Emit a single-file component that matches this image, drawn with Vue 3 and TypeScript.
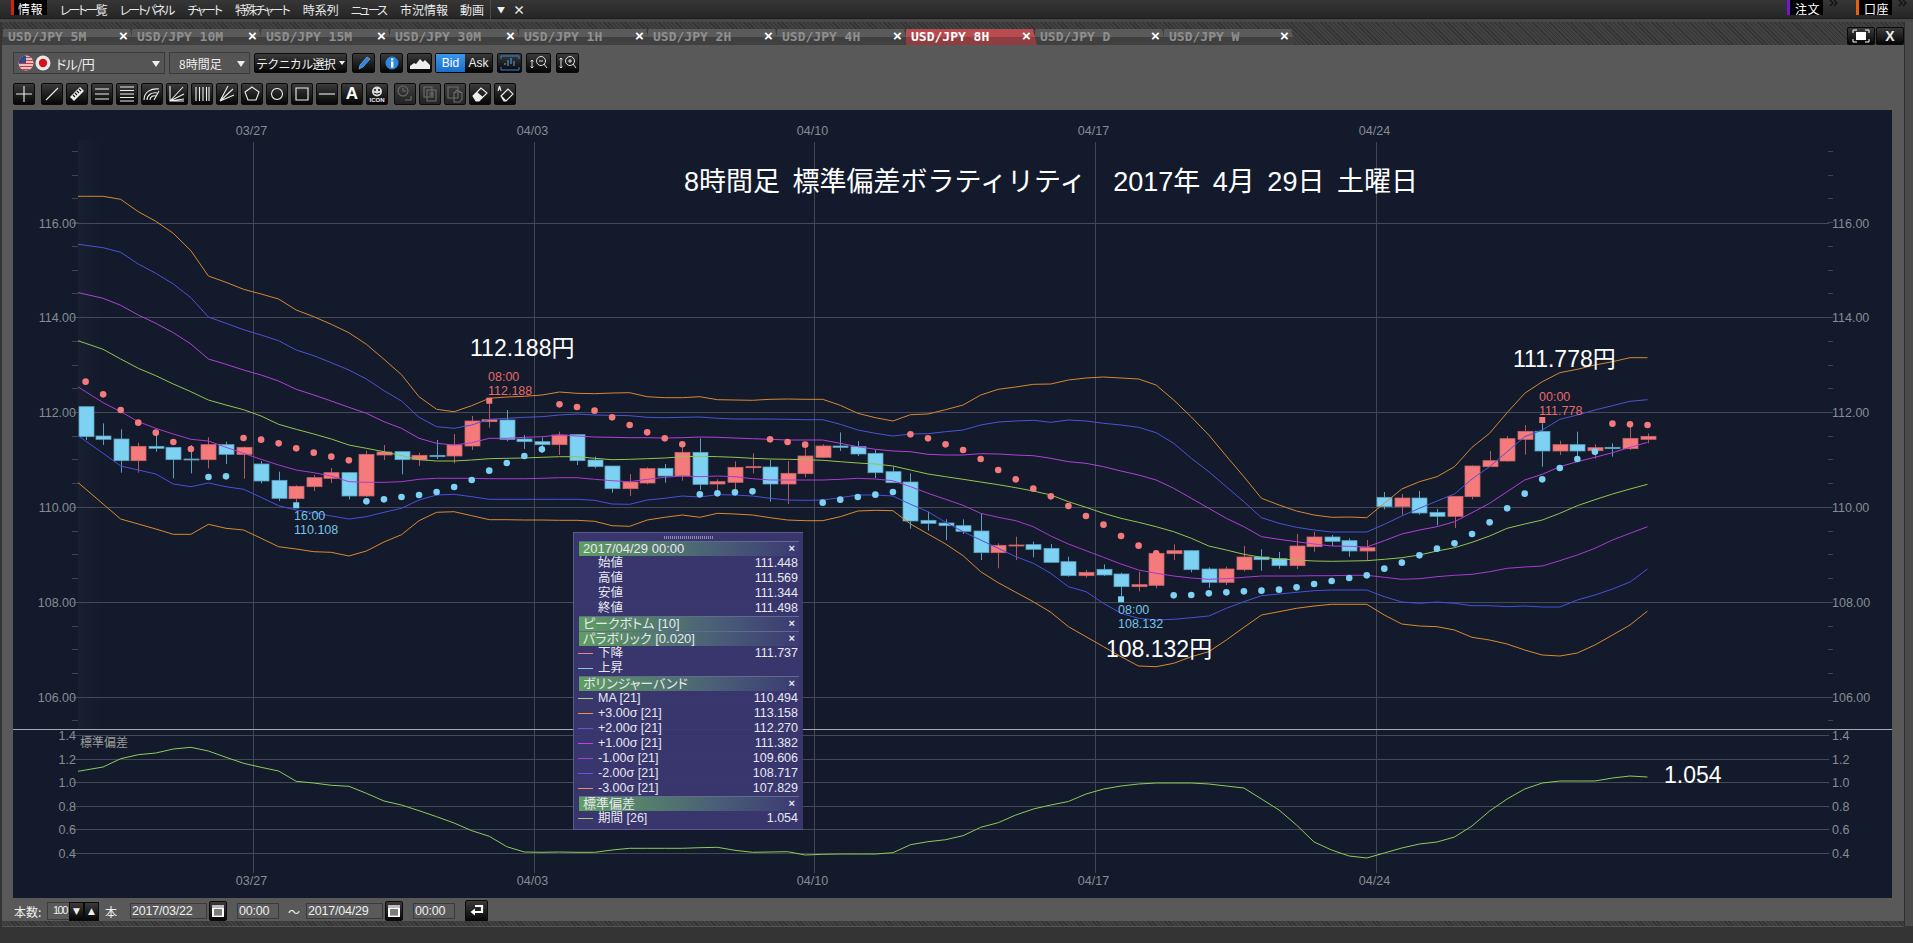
<template>
  <div class="app">
    <div class="menubar">
      <span class="grip"></span>
      <span class="menu-active">情報</span>
      <nav class="menu">
        <span v-for="m in menus" :key="m.text" :class="{ kana: m.kana }">{{ m.text }}</span>
      </nav>
      <span class="menu-sep"></span>
      <span class="menu-caret">▼</span>
      <span class="menu-x">×</span>
      <div class="menu-right">
        <span class="grip2"></span>
        <span class="pill pill-purple">注文</span>
        <span class="chev"><svg width="10" height="7" viewBox="0 0 10 7"><path d="M1 0l3 3-3 3M5 0l3 3-3 3" fill="none" stroke="#111" stroke-width="1.4"/></svg></span>
        <span class="grip2 second"></span>
        <span class="pill pill-orange">口座</span>
        <span class="chev"><svg width="10" height="7" viewBox="0 0 10 7"><path d="M1 0l3 3-3 3M5 0l3 3-3 3" fill="none" stroke="#111" stroke-width="1.4"/></svg></span>
      </div>
    </div>
    <div class="gap-strip"></div>

    <div class="workspace">
      <div class="window">
        <div class="tabbar">
          <div v-for="t in tabs" :key="t" class="tab" :class="{ active: t === activeTab }">
            <span>USD/JPY {{ t }}</span><b>×</b>
          </div>
          <div class="win-btns">
            <button class="btn win"><svg width="18" height="14" viewBox="0 0 18 14"><path d="M1 4V1h4M13 1h4v3M17 10v3h-4M5 13H1v-3" fill="none" stroke="#fff"/><rect x="4" y="3" width="10" height="8" fill="#fff"/></svg></button>
            <button class="btn win big-x">X</button>
          </div>
        </div>

        <div class="body">
          <div class="tools">
            <div class="sel sel-pair">
              <svg width="33" height="20" viewBox="0 0 33 20">
                <defs>
                  <clipPath id="us"><circle cx="8" cy="10" r="7.5" /></clipPath>
                </defs>
                <g clip-path="url(#us)">
                  <rect x="0" y="2" width="16" height="16" fill="#eee" />
                  <path d="M0 4.5h16M0 7.5h16M0 10.5h16M0 13.5h16M0 16.5h16" stroke="#c9373f" stroke-width="1.5" />
                  <rect x="0" y="2" width="8" height="8" fill="#34488c" />
                </g>
                <circle cx="25" cy="10" r="7.5" fill="#e8e8e8" />
                <circle cx="25" cy="10" r="4.2" fill="#d3141c" />
              </svg>
              <span>ドル/円</span><i class="caret"></i>
            </div>
            <div class="sel sel-time"><span>8時間足</span><i class="caret"></i></div>
            <button class="btn tech">テクニカル選択<i class="caret small"></i></button>
            <button class="btn w23"><svg width="16" height="16" viewBox="0 0 16 16"><path d="M3 14l1-4 7-8 3 2-7 8z" fill="#2c86e0" stroke="#7cc0ff" stroke-width=".6"/></svg></button>
            <button class="btn w23"><svg width="16" height="16" viewBox="0 0 16 16"><circle cx="8" cy="8" r="6.5" fill="#2c86e0"/><rect x="7" y="6.5" width="2.4" height="6" fill="#fff"/><rect x="7" y="3.4" width="2.4" height="2" fill="#fff"/></svg></button>
            <button class="btn w25"><svg width="20" height="12" viewBox="0 0 20 12"><path d="M0 12V9l4-3 2 1 4-5 3 3 2-2 5 5v4z" fill="#eee"/></svg></button>
            <div class="bidask"><span class="bid">Bid</span><span class="ask">Ask</span></div>
            <button class="btn w25"><svg width="20" height="16" viewBox="0 0 20 16"><path d="M1 4V1h18v3M1 12v3h18v-3" fill="none" stroke="#2c86e0"/><path d="M5 10V8M8 11V5M11 9V3M14 11V6" stroke="#5aa8f0"/></svg></button>
            <button class="btn w25"><svg width="20" height="16" viewBox="0 0 20 16"><circle cx="12" cy="6" r="4.5" fill="none" stroke="#ddd"/><path d="M15 9l3 4M10 6h4M3 5v8M1.5 6.5L3 5l1.5 1.5M1.5 11.5L3 13l1.5-1.5" stroke="#ddd" fill="none"/></svg></button>
            <button class="btn w23"><svg width="20" height="16" viewBox="0 0 20 16"><circle cx="12" cy="6" r="4.5" fill="none" stroke="#ddd"/><path d="M15 9l3 4M10 6h4M12 4v4M3 3v10M1.5 4.5L3 3l1.5 1.5M1.5 11.5L3 13l1.5-1.5" stroke="#ddd" fill="none"/></svg></button>
          </div>

          <div class="tools second">
            <button v-for="(ic, n) in drawTools" :key="n" class="btn tool" :class="{ dim: ic.dim, spaced: ic.gap }">
              <svg v-if="ic.d || ic.solid" width="18" height="18" viewBox="0 0 18 18">
                <path v-if="ic.solid" :d="ic.solid" fill="currentColor" />
                <path v-if="ic.d" :d="ic.d" fill="none" stroke="currentColor" stroke-width="1.1" />
                <path v-if="ic.ink" :d="ic.ink" fill="none" stroke="#111" stroke-width="1.1" />
              </svg>
              <span v-else-if="ic.letter" class="tool-a">{{ ic.letter }}</span>
              <span v-else class="tool-face">
                <svg width="12" height="11" viewBox="0 0 12 11"><circle cx="6" cy="5.5" r="5" fill="#ddd"/><circle cx="4" cy="4" r="1" fill="#111"/><circle cx="8" cy="4" r="1" fill="#111"/><path d="M3 7q3 2.5 6 0" stroke="#111" fill="none"/></svg>
                <em>ICON</em>
              </span>
            </button>
          </div>

          <div class="chart-wrap">
            <svg class="chart" width="1879" height="788" viewBox="13 110 1879 788">
              <defs>
                <linearGradient id="gutter" x1="0" x2="1" y1="0" y2="0">
                  <stop offset="0" stop-color="#fff" stop-opacity=".025" />
                  <stop offset="1" stop-color="#fff" stop-opacity="0" />
                </linearGradient>
              </defs>
              <rect x="13" y="110" width="1879" height="788" fill="#121a2b" />
              <rect x="78" y="140" width="24" height="590" fill="url(#gutter)" />

              <line v-for="y in ticks" :key="'t' + y" x1="72" x2="78" :y1="y" :y2="y" class="tick" />
              <line v-for="y in ticks" :key="'r' + y" x1="1828" x2="1833" :y1="y" :y2="y" class="tick" />
              <line v-for="a in mainAxis" :key="'h' + a.label" x1="72" x2="1829" :y1="a.y" :y2="a.y" class="grid" />
              <line v-for="a in subAxis" :key="'s' + a.label" x1="72" x2="1829" :y1="a.y" :y2="a.y" class="grid" />
              <line v-for="d in dates" :key="'v' + d.label" :x1="d.x" :x2="d.x" y1="142" y2="873" class="vgrid" />
              <line x1="13" x2="1892" y1="729.5" y2="729.5" class="divider" />

              <template v-for="a in [...mainAxis, ...subAxis]" :key="'l' + a.label">
                <text class="axis" x="76" :y="a.y + 4.5" text-anchor="end">{{ a.label }}</text>
                <text class="axis" x="1832" :y="a.y + 4.5">{{ a.label }}</text>
              </template>
              <template v-for="d in dates" :key="'d' + d.label">
                <text class="axis" :x="d.x - 2" y="135" text-anchor="middle">{{ d.label }}</text>
                <text class="axis" :x="d.x - 2" y="885" text-anchor="middle">{{ d.label }}</text>
              </template>

              <g v-for="(c, i) in candles" :key="'c' + i">
                <line :x1="c.x" :x2="c.x" :y1="c.hi" :y2="c.lo" :stroke="c.up ? '#b3595d' : '#5d9fbd'" />
                <rect :x="c.x - 7.5" :y="c.top" width="15" :height="c.h" :fill="c.up ? upColor : downColor"
                  :stroke="c.up ? '#c8666a' : '#5d9fbd'" stroke-width=".8" />
              </g>

              <polyline v-for="(b, i) in bands" :key="'b' + i" :points="b.points" :stroke="b.color" class="band" />
              <polyline :points="stdPoints" stroke="#8ecb5c" class="band" />

              <circle v-for="(p, i) in dots" :key="'p' + i" :cx="p.x" :cy="p.y" r="3.3" :fill="p.up ? upColor : downColor" />

              <rect v-for="m in markers" :key="'m' + m.x" :x="m.x - 3" :y="m.y - 3" width="6" height="6" :fill="m.up ? upColor : downColor" />
              <template v-for="n in notes" :key="n.value">
                <text class="note" :x="n.x" :y="n.y" :fill="n.up ? '#e8696c' : '#74c6ea'">{{ n.time }}</text>
                <text class="note" :x="n.x" :y="n.y + 14" :fill="n.up ? '#e8696c' : '#74c6ea'">{{ n.value }}</text>
              </template>

              <text class="title" x="684" y="191">8時間足 標準偏差ボラティリティ　2017年 4月 29日 土曜日</text>
              <text class="big" x="470" y="356">112.188円</text>
              <text class="big" x="1513" y="367">111.778円</text>
              <text class="big" x="1106" y="657">108.132円</text>
              <text class="big" x="1664" y="783">1.054</text>
              <text class="sub-name" x="80" y="747">標準偏差</text>
            </svg>

            <div class="info">
              <div class="info-grip"></div>
              <template v-for="row in infoRows" :key="row.label">
                <div v-if="row.head" class="info-head"><span>{{ row.label }}</span><b>×</b></div>
                <div v-else class="info-row">
                  <i class="swatch" :style="{ background: row.color || 'transparent' }"></i>
                  <span class="info-label">{{ row.label }}</span>
                  <span class="info-val">{{ row.value }}</span>
                </div>
              </template>
            </div>
          </div>

          <div class="foot">
            <span class="foot-label">本数:</span>
            <span class="field count">100</span>
            <button class="btn step">▼</button>
            <button class="btn step">▲</button>
            <span class="foot-label hon">本</span>
            <span class="field date">2017/03/22</span>
            <button class="btn cal"><svg width="14" height="14" viewBox="0 0 14 14"><rect x="1" y="1" width="12" height="12" fill="#fff"/><rect x="1" y="1" width="12" height="3" fill="#bbb"/><path d="M3 6h8M3 8h8M3 10h8M4 5v7M6 5v7M8 5v7M10 5v7" stroke="#333" stroke-width=".8"/></svg></button>
            <span class="field time">00:00</span>
            <span class="tilde">〜</span>
            <span class="field date">2017/04/29</span>
            <button class="btn cal"><svg width="14" height="14" viewBox="0 0 14 14"><rect x="1" y="1" width="12" height="12" fill="#fff"/><rect x="1" y="1" width="12" height="3" fill="#bbb"/><path d="M3 6h8M3 8h8M3 10h8M4 5v7M6 5v7M8 5v7M10 5v7" stroke="#333" stroke-width=".8"/></svg></button>
            <span class="field time">00:00</span>
            <button class="btn back"><svg width="16" height="14" viewBox="0 0 16 14"><path d="M6 2h7v6H4" fill="none" stroke="#fff" stroke-width="2.2"/><path d="M6 4.5L1.5 8 6 11.5z" fill="#fff"/></svg></button>
          </div>
        </div>
        <div class="foot-hatch"></div>
      </div>
      <div class="edge"></div>
    </div>
  </div>
</template>

<script setup lang="ts">
type Row = { label: string; head?: boolean; value?: string; color?: string }
type Tool = { d?: string; solid?: string; ink?: string; dim?: boolean; gap?: boolean; letter?: string }

const menus = [
  { text: 'レート一覧', kana: true },
  { text: 'レートパネル', kana: true },
  { text: 'チャート', kana: true },
  { text: '特殊チャート', kana: true },
  { text: '時系列', kana: false },
  { text: 'ニュース', kana: true },
  { text: '市況情報', kana: false },
  { text: '動画', kana: false }
]
const tabs = ['5M', '10M', '15M', '30M', '1H', '2H', '4H', '8H', 'D', 'W']
const activeTab = '8H'
const upColor = '#f47a7c'
const downColor = '#7dd2f3'

const drawTools: Tool[] = [
  { d: 'M9 1v16M1 9h16' },
  { d: 'M3 15L15 3', gap: true },
  { solid: 'M2 12L12 2l4 4L6 16z', ink: 'M5 10l2 2M7 8l2 2M9 6l2 2M11 4l2 2' },
  { d: 'M2 4h14M2 9h14M2 14h14' },
  { d: 'M2 2h14M2 5.5h14M2 9h14M2 12.5h14M2 16h14' },
  { d: 'M1 15C1 7 8 3 16 4M4 15c0-5 5-8 10-7M7 15c0-3 3-5 6-4M11 15l5-9' },
  { d: 'M2 1v15h14M2 16L15 2M2 16l14-7M2 16l14-2' },
  { d: 'M3 2v14M6.5 2v14M10 2v14M13.5 2v14M16 2v14' },
  { d: 'M2 16L10 1M2 16L15 4M2 16l14-6' },
  { d: 'M9 2l7 5-3 8H5L2 7z' },
  { d: 'M9 3.5a5.5 5.5 0 1 0 .01 0z' },
  { d: 'M3 3h12v12H3z' },
  { d: 'M1 9h16' },
  { letter: 'A' },
  {},
  { d: 'M7 1a5 5 0 1 0 .01 0zM7 3v3h3M9 15h6v-4', dim: true, gap: true },
  { d: 'M3 2h8v10H3zM6 5h9v11H6zM8 8h5M8 10h5M8 12h5', dim: true },
  { d: 'M2 2h10v11H2zM8 17V8c0-1 2-1 2 0V6c0-1 2-1 2 0v1c0-1 2-1 2 0v1c0-1 2-1 2 0v6l-2 3z', dim: true },
  { d: 'M2 11l8-8 6 5-8 8H5z', solid: 'M2 11l4-4 6 5-4 4H5z' },
  { d: 'M2 4h3M3.5 1L2 6M3.5 1L5 6M5 11l7-7 5 5-7 7H8zM5 11l5 5' }
]

// x of the n-th candle, one candle every 17.55px
const cx = (i: number) => 85.6 + 17.55 * i
// values below were measured on 3x crops, each block has its own top edge
const lift = (base: number, vals: number[]) => vals.map((v) => base + v / 3)

type Ohlc = [number, number, number, number, number]
const blocks: [number, Ohlc[]][] = [
  [360, [
    [0,140,140,230,240],[0,190,228,238,255],[0,208,237,302,338],[1,248,259,302,338],[0,218,259,265,275],[0,262,262,299,355],
    [0,255,297,299,340],[1,232,254,299,325],[0,245,254,283,312],[1,260,262,283,356],[0,303,312,363,370],[0,335,361,415,423],
    [1,376,379,416,430],[1,345,353,380,393],[1,324,338,355,369],[0,338,338,408,418],[1,272,283,408,410],[1,255,276,285,300],
    [0,275,275,299,343],[1,278,286,299,318],[0,240,286,290,297],[1,222,255,288,310],[1,168,183,258,270],[1,122,179,185,203],
    [0,150,180,238,244],[0,225,237,245,267],[0,232,245,254,278],[1,215,225,254,285],[0,222,224,302,315],[0,290,300,320,325],
    [0,318,318,386,398],[1,342,366,386,408],[1,322,326,369,373],[0,312,325,348,368],[1,262,277,348,362],[0,235,277,373,390],
    [1,358,365,372,390],[1,304,322,367,390],[1,280,320,323,340],[0,300,321,372,425],[1,303,340,372,432],[1,265,288,341,352],
    [1,253,258,292,294],[0,217,258,262,273],[0,243,260,282,288],[0,270,280,338,354],[0,320,335,368,368],[0,340,366,483,506],
    [0,455,481,490,512],[0,478,489,497,540],[0,478,497,514,522]
  ]],
  [440, [[0,222,273,338,360],[1,310,316,338,385],[1,290,315,318,360],[0,305,314,328,352],[0,312,325,367,367]]],
  [420, [
    [0,410,425,467,470],[1,450,457,467,473],[0,433,448,465,468],[0,458,462,500,530],[1,455,494,500,514],[1,392,400,496,505],
    [1,373,392,401,420],[0,392,392,449,457],[0,442,447,487,503],[1,440,447,487,495],[1,378,411,449,454],[0,388,411,419,452],
    [0,396,416,437,446],[1,342,378,437,447],[1,336,351,380,395],[0,345,351,364,378],[0,355,362,393,410],[1,360,383,393,423],
    [0,216,232,260,268],[1,222,234,260,285],[0,213,234,279,284],[0,267,277,289,316],[1,229,229,289,324],[1,136,138,230,238],
    [1,93,122,140,140],[1,48,56,123,125],[1,15,34,58,104]
  ]],
  [340, [[0,250,274,333,380],[1,302,314,333,345],[0,275,314,333,350],[1,313,323,332,356],[0,310,322,326,350],[1,260,295,326,330],[1,280,289,298,310]]]
]

const candles = blocks.flatMap(([base, list]) => list.map(([up, hi, top, bot, lo]) => ({
  up: up === 1,
  hi: base + hi / 3,
  top: base + top / 3,
  h: Math.max((bot - top) / 3, 1),
  lo: base + lo / 3
}))).map((c, i) => ({ ...c, x: Math.round(cx(i)) + 0.5 }))

// parabolic dots: [first candle, is it the falling (red) side, top edge, values]
const dotRuns: [number, boolean, number, number[]][] = [
  [0, true, 360, [65,103,150,188,218,246,267]],
  [7, false, 360, [351,349]],
  [9, true, 360, [234,239,250,265,278,290,301]],
  [16, false, 360, [424,418,411,405,396,381,360,332,309,288,268]],
  [27, true, 360, [133,141,152,172,195,217,235,253]],
  [35, false, 360, [403,400,397,394]],
  [39, true, 360, [238,246,254]],
  [42, false, 360, [428,419,411,404,396]],
  [47, true, 360, [223,235,253,270,297,330,358,386,409]],
  [56, true, 420, [258,288,314,348,377,400]],
  [62, false, 420, [526,525,520,517,514,512,509,502,492,483,474,466,446,428,406,386,370,342,307,265,221,178,144]],
  [85, false, 340, [357,335]],
  [87, true, 340, [251,253,255]]
]
const dots = dotRuns.flatMap(([start, up, base, vals]) =>
  vals.map((v, n) => ({ x: cx(start + n), y: base + v / 3, up }))
)

const toPoints = (ys: number[]) => {
  const pts = ys.map((y, i) => `${cx(i).toFixed(1)},${y.toFixed(1)}`)
  pts.unshift(`78,${(ys[0] - (ys[1] - ys[0]) * 0.43).toFixed(1)}`)
  return pts.join(' ')
}

const plus3 = [
  ...lift(180, [49,49,58,95,124,160,212,288,307,328,342,357,390,410,433,458,493,538,584,650,688,695,677,655,651,649,645,636]),
  ...lift(360, [100,101,99,98,110,113,113,110,119,120,121,118,117,118,118,136,160,173,183,164,162,149,135,105,88,81,73,72]),
  380, 378, 377, 378, 379, 385, 400,
  ...lift(420, [-9,45,108,170,235,255,273,285,292,291,293,250,207,185,170,140]),
  ...lift(340, [322,280,218,160,125,98,88,75,65,53,53])
]
const plus2 = [
  ...lift(180, [196,203,217,252,280,312,353,411,430,449,465,482,510,527,548,570,597,632,663]),
  ...lift(360, [172,200,205,195,178,175,172,170,165,162,165,166,167,172,173,172,171,175,177,177,177,178,179,179,193,210,220,228,222,221,215,210,195,186,183,181,187]),
  ...lift(420, [0,3,10,15,22,38,70,115,155,200,245,293,310,322,330,336,336,336,313,288,265,243,222]),
  ...lift(340, [417,380,335,290,270,238,225,210,197,184,179])
]
const plus1 = [
  ...lift(180, [343,355,376,405,430,458,492,537,553,570,585,603,628,645,663,682,700,725]),
  ...lift(360, [205,235,250,255,248,235,235,232,230,225,228,231,232,233,233,234,233,231,232,234,236,238,240,240,240,250,260,268,273,275,283,285,285,281,282,285,287,295]),
  ...lift(420, [125,130,140,153,165,180,205,235,265,295,320,350,358,365,372,378,379,381,362,342,330,320,305,278,250,215]),
  ...lift(340, [420,403,380,365,352,338,322,307])
]
const middle = [
  ...lift(180, [490,508,537,565,587,612,635,660,675,689,708]),
  ...lift(360, [193,208,222,237,255,265,275,287,299,303,303,300,296,295,294,292,290,290,295,299,298,296,294,290,289,290,292,295,297,298,299,301,305,309,312,318,330,342,350,358,366,374,383,393,405]),
  ...lift(420, [245,262,280,295,307,320,335,355,378,390,403,412,417,420,423,424,423,422,418,413,405,393,383,367,348,325,312,300,280]),
  ...lift(340, [497,479,462,447,433])
]
const minus1 = [
  ...lift(360, [95,128,155,185,205,222,238,243,262,280,298,315,330,338,348,365,367,367,365,358,355,355,355,356,356,356,355,353,353,358,362,365,358,352,348,350,348,350,356,360,360,360,360,358,355,357,362,380,400,418,436,460,472,482,500,528]),
  ...lift(420, [372,392,412,432,450,460,468,474,478,476,472,468,468,468,467,467,466,466,472,478,476,470,466,463,455,445,441,438,422]),
  ...lift(340, [645,625,600,580,560])
]
const minus2 = [
  ...lift(360, [243,280,318,330,342,372,380,369,380,388,412,437,450,458,468,477,470,457,445,420,405,403,410,418,418,418,418,418,418,421,432,433,420,415,408,411,404,405,408,415,420,421,420,413,405,405,408,433,455]),
  ...lift(440, [247,275,300,325,350,370,400,440,455,490,520,535,540,538,533,528,505,485,467,462,457,452,450,450,450,470,486,490,486,490,497,497,500]),
  606, 607, 607, 600, 595, 589, 582, 569
]
const minus3 = [
  ...lift(360, [387,432,477,492,507,523,523,493,505,510,535,560,567,575,577,588,573,546,524,482,457,455,467,479,479,480,480,481,481,484,497,499,480,472,465,472,460,462,465,473,480,482,482,470,453,451,452]),
  ...lift(440, [252,282,312,347,395,428,457,485,517,560,590,620,650,678,680,670,650,635,600,562,525,515,505,498,493,493,493,525,552,558,560,570,592,600,612]),
  650, 655, 656, 653, 645, 635, 625, 611
]

const bands = [
  { color: '#d8882f', points: toPoints(plus3) },
  { color: '#4d54d6', points: toPoints(plus2) },
  { color: '#b33fdc', points: toPoints(plus1) },
  { color: '#93c64d', points: toPoints(middle) },
  { color: '#a93bd2', points: toPoints(minus1) },
  { color: '#4a50dc', points: toPoints(minus2) },
  { color: '#dd8a2c', points: toPoints(minus3) }
]

const stdLine = [
  ...lift(720, [150,141,116,104,99,87,82,93,112,130,142,153,184,189,196,199,220,243,255,272,290,309,332,349,380,396,397,396,397,397,390,385,385,385,385,383,382,391,397,396,395,405,403,402,402,402,398,374,365,359,347,322,308]),
  815, 809, 805, 801.5, 794, 789, 786, 784, 783, 783, 783, 784, 786, 788, 799, 810, 825, 842, 850, 856, 858, 853, 848, 844, 842, 837, 826, 811, 799, 789, 783, 781, 781, 781, 778, 776, 777
]
const stdPoints = toPoints(stdLine)

const mainAxis = [116, 114, 112, 110, 108, 106].map((v) => ({
  label: v.toFixed(2),
  y: Math.round(412.3 + (112 - v) * 47.45) + 0.5
}))
const subAxis = [1.4, 1.2, 1.0, 0.8, 0.6, 0.4].map((v, i) => ({
  label: v.toFixed(1),
  y: Math.round(735 + i * 23.55) + 0.5
}))
const ticks = Array.from({ length: 25 }, (_, i) => Math.round(151 + i * 23.725) + 0.5).filter((y) => y < 725)
const dates = ['03/27', '04/03', '04/10', '04/17', '04/24'].map((label, i) => ({
  label,
  x: Math.floor(253.7 + i * 280.6) + 0.5
}))

const markers = [
  { x: cx(23), y: 400.7, up: true },
  { x: cx(12), y: 505.3, up: false },
  { x: cx(59), y: 599.3, up: false },
  { x: cx(83), y: 420, up: true }
]
const notes = [
  { x: 488, y: 381, time: '08:00', value: '112.188', up: true },
  { x: 294, y: 520, time: '16:00', value: '110.108', up: false },
  { x: 1118, y: 614, time: '08:00', value: '108.132', up: false },
  { x: 1539, y: 401, time: '00:00', value: '111.778', up: true }
]

const infoRows: Row[] = [
  { label: '2017/04/29 00:00', head: true },
  { label: '始値', value: '111.448' },
  { label: '高値', value: '111.569' },
  { label: '安値', value: '111.344' },
  { label: '終値', value: '111.498' },
  { label: 'ピークボトム [10]', head: true },
  { label: 'パラボリック [0.020]', head: true },
  { label: '下降', value: '111.737', color: '#f47c7c' },
  { label: '上昇', value: '', color: '#7cc8ee' },
  { label: 'ボリンジャーバンド', head: true },
  { label: 'MA [21]', value: '110.494', color: '#a8d080' },
  { label: '+3.00σ [21]', value: '113.158', color: '#f79030' },
  { label: '+2.00σ [21]', value: '112.270', color: '#5858d8' },
  { label: '+1.00σ [21]', value: '111.382', color: '#c040f0' },
  { label: '-1.00σ [21]', value: '109.606', color: '#a040d0' },
  { label: '-2.00σ [21]', value: '108.717', color: '#5858f0' },
  { label: '-3.00σ [21]', value: '107.829', color: '#e8905a' },
  { label: '標準偏差', head: true },
  { label: '期間 [26]', value: '1.054', color: '#a0c878' }
]
</script>

<style>
html, body { margin: 0; background: #333; }
</style>

<style scoped>
.app {
  width: 1913px;
  height: 943px;
  display: flex;
  flex-direction: column;
  overflow: hidden;
  background: #343434;
  font-family: "Liberation Sans", "Noto Sans CJK JP", sans-serif;
  font-feature-settings: "palt";
  color: #eee;
}

/* top menu */
.menubar {
  height: 19px;
  display: flex;
  align-items: center;
  background: linear-gradient(#363636, #262626);
  border-bottom: 1px solid #1c1c1c;
  box-sizing: border-box;
  font-family: "Noto Sans CJK JP", sans-serif;
  font-size: 12px;
}
.grip {
  width: 7px;
  height: 16px;
  margin: 0 4px 0 0;
  background: radial-gradient(#777 40%, transparent 45%) 0 0 / 2px 2px;
}
.menu-active {
  height: 15px;
  width: 36px;
  align-self: flex-start;
  box-sizing: border-box;
  padding-left: 4px;
  background: #000;
  border-left: 3px solid #d8200f;
  line-height: 18px;
  letter-spacing: 0.5px;
  color: #fff;
}
.menu {
  display: flex;
  gap: 12px;
  margin-left: 13px;
  color: #e8e8e8;
  white-space: nowrap;
}
.menu .kana { letter-spacing: -2px; padding-right: 2px; }
.menu-sep { width: 1px; height: 19px; background: #4b4b4b; margin-left: 6px; }
.menu-caret { font-size: 8px; margin-left: 6px; }
.menu-x { font-size: 12px; font-weight: bold; margin-left: 8px; }
.menu-right { margin-left: auto; display: flex; align-items: flex-start; height: 19px; }
.grip2 {
  width: 7px;
  height: 19px;
  margin-right: 4px;
  background: radial-gradient(#777 40%, transparent 45%) 0 0 / 2px 2px;
}
.grip2.second { margin-left: 1px; }
.pill {
  height: 15px;
  width: 36px;
  box-sizing: border-box;
  padding-left: 5px;
  background: #000;
  line-height: 18px;
  letter-spacing: 0.5px;
  color: #fff;
}
.pill-purple { border-left: 3px solid #7a12d8; }
.pill-orange { border-left: 3px solid #e8620e; }
.chev { width: 21px; display: flex; justify-content: center; }

.gap-strip { height: 3px; background: #484848; }

.workspace { flex: 1; display: flex; min-height: 0; padding-left: 2px; }
.window { width: 1902px; display: flex; flex-direction: column; }
.edge { flex: 1; background: #4b4b4b; border-left: 1px solid #2f2f2f; height: 904px; }

/* tabs */
.tabbar {
  height: 23px;
  display: flex;
  align-items: flex-end;
  padding-left: 1px;
  background: repeating-linear-gradient(45deg, #333 0 1px, #414141 1px 3px);
}
.tab {
  width: 131px;
  height: 16px;
  margin-right: -2px;
  flex: none;
  position: relative;
  box-sizing: border-box;
  padding-left: 5px;
  clip-path: polygon(0 100%, 0 1px, 1px 0, 127px 0, 131px 100%);
  background: linear-gradient(#5a5a5a 50%, #404040 50%);
  font: bold 13px/16px "DejaVu Sans Mono", monospace;
  color: #8f8f8f;
  white-space: nowrap;
}
.tab b {
  position: absolute;
  left: 116px;
  top: -1px;
  font: bold 15px/16px "Liberation Sans", sans-serif;
  color: #fff;
}
.tab.active {
  z-index: 1;
  background: linear-gradient(#b84d50 50%, #8e3d40 50%);
  color: #fff;
}
.win-btns { margin-left: auto; display: flex; gap: 1px; }

.btn {
  display: inline-flex;
  align-items: center;
  justify-content: center;
  box-sizing: border-box;
  height: 22px;
  padding: 0;
  border: 1px solid #0b0b0b;
  border-radius: 2px;
  background: linear-gradient(#3a3a3a, #060606);
  color: #eee;
  font-family: "Noto Sans CJK JP", sans-serif;
}
.win { width: 28px; height: 18px; }
.big-x { font: bold 14px "Liberation Sans", sans-serif; }

/* panel */
.body {
  height: 876px;
  box-sizing: border-box;
  padding: 7px 12px 0 11px;
  background: #595959;
}
.tools { display: flex; align-items: center; height: 22px; }
.sel {
  height: 22px;
  box-sizing: border-box;
  display: flex;
  align-items: center;
  border: 1px solid #3b3b3b;
  background: #555;
  font-family: "Noto Sans CJK JP", sans-serif;
  font-size: 12px;
  position: relative;
}
.sel-pair { width: 152px; padding-left: 4px; }
.sel-pair span { margin-left: 5px; font-size: 13px; letter-spacing: -0.6px; }
.sel-time { width: 81px; margin-left: 4px; padding-left: 9px; }
.caret {
  position: absolute;
  right: 4px;
  top: 8px;
  border: 4.5px solid transparent;
  border-top: 6px solid #eee;
  border-bottom: 0;
}
.caret.small { position: static; margin-left: 4px; border-width: 4px 3.5px 0; border-top-color: #eee; }
.tech { width: 93px; height: 20px; margin-left: 4px; font-size: 12px; letter-spacing: -0.7px; white-space: nowrap; }
.w23 { width: 23px; margin-left: 5px; height: 20px; }
.w25 { width: 25px; margin-left: 4px; height: 20px; }
.bidask {
  display: flex;
  width: 58px;
  height: 20px;
  margin-left: 3px;
  border: 1px solid #0b0b0b;
  box-sizing: border-box;
  border-radius: 2px;
  font-size: 12px;
  line-height: 18px;
  text-align: center;
}
.bid { width: 29px; background: linear-gradient(#3b96ea, #1a6fca); color: #fff; }
.ask { flex: 1; background: linear-gradient(#3a3a3a, #060606); }

.second { margin-top: 9px; gap: 3px; }
.tool { width: 22px; flex: none; }
.tool.spaced { margin-left: 3px; }
.tool.dim { color: #6e6e6e; background: linear-gradient(#3f3f3f, #222); }
.tool-a { font: bold 17px "Liberation Sans", sans-serif; color: #fff; }
.tool-face { display: flex; flex-direction: column; align-items: center; line-height: 6px; }
.tool-face em { font: bold 6px/6px "Liberation Sans", sans-serif; color: #eee; }

/* chart */
.chart-wrap { position: relative; margin-top: 5px; height: 788px; }
.chart { display: block; }
.grid { stroke: #444955; }
.vgrid { stroke: #414652; }
.tick { stroke: #3f4450; }
.divider { stroke: #a8abae; }
.axis { font: 12.5px "Liberation Sans", sans-serif; fill: #878c94; }
.band { fill: none; stroke-width: 1; }
.note { font: 12.5px "Liberation Sans", sans-serif; }
.title {
  font: 27px "Liberation Sans", "Noto Sans CJK JP", sans-serif;
  font-feature-settings: normal;
  word-spacing: 5px;
  fill: #fff;
}
.big {
  font: 23px "Liberation Sans", "Noto Sans CJK JP", sans-serif;
  font-feature-settings: normal;
  fill: #fff;
}
.sub-name { font: 12px "Noto Sans CJK JP", sans-serif; fill: #9a9a9a; }

/* crosshair data window */
.info {
  position: absolute;
  left: 560px;
  top: 422px;
  width: 230px;
  height: 298px;
  box-sizing: border-box;
  padding: 8px 4px 0 5px;
  background: rgba(58, 56, 112, 0.97);
  border: 1px solid #5a5a8e;
  border-width: 1px 0 1px 1px;
  font-size: 12.5px;
  color: #e8e8f2;
}
.info-grip {
  position: absolute;
  left: 90px;
  top: 3px;
  width: 50px;
  height: 3px;
  background: repeating-linear-gradient(90deg, #8c8cb0 0 1px, transparent 1px 2px);
}
.info-head {
  height: 15px;
  display: flex;
  justify-content: space-between;
  align-items: center;
  padding: 0 4px 2px 4px;
  background: linear-gradient(90deg, #5f9e60, #4a5f78 62%, #3b3a72);
  border-top: 1px solid #5f6a8c;
  box-sizing: border-box;
  font-size: 13px;
  line-height: 13px;
  white-space: nowrap;
}
.info-head b { font-size: 11px; font-weight: bold; }
.info-row { height: 15px; display: flex; align-items: center; line-height: 15px; }
.swatch { width: 15px; height: 1px; margin-left: -1px; flex: none; }
.info-label { margin-left: 5px; }
.info-val { margin-left: auto; margin-right: 1px; }

/* footer */
.foot {
  display: flex;
  align-items: center;
  height: 20px;
  margin-top: 3px;
  font-size: 12.5px;
}
.foot-label { font-family: "Noto Sans CJK JP", sans-serif; font-size: 12px; color: #eee; margin-left: 1px; width: 33px; }
.hon { width: 14px; margin-left: 6px; }
.field {
  box-sizing: border-box;
  height: 16px;
  line-height: 14px;
  border: 1px solid #3b3b3b;
  background: #5a5a5a;
  padding-left: 1px;
  letter-spacing: -0.2px;
  color: #eee;
  white-space: nowrap;
}
.count { width: 22px; height: 18px; font-size: 11px; border-right: 0; letter-spacing: -1.5px; padding-left: 5px; line-height: 14px; }
.step { width: 15px; height: 19px; font: 9px "DejaVu Sans", sans-serif; border-radius: 0; flex: none; }
.date { width: 77px; margin-left: 11px; }
.time { width: 42px; margin-left: 10px; }
.tilde { width: 12px; margin-left: 9px; margin-right: -5px; font-size: 12px; font-family: "Noto Sans CJK JP", sans-serif; }
.cal { width: 18px; height: 20px; margin-left: 2px; flex: none; }
.back { width: 23px; height: 22px; margin-left: 10px; flex: none; }
.foot-hatch {
  height: 5px;
  background: repeating-linear-gradient(45deg, #333 0 1px, #414141 1px 3px);
  border-bottom: 1px solid #555;
}
</style>
